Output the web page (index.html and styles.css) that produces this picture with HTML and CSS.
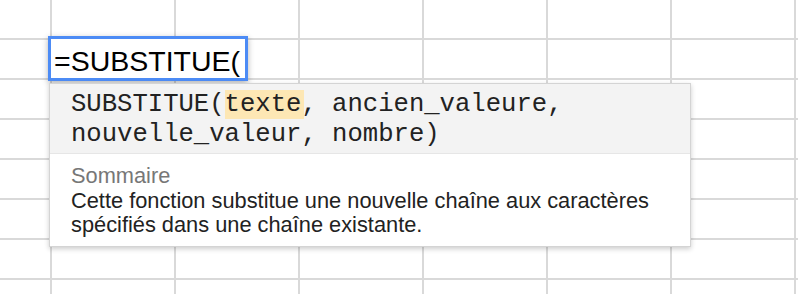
FILE: index.html
```html
<!DOCTYPE html>
<html lang="fr">
<head>
  <meta charset="UTF-8" />
  <title>Feuille - SUBSTITUE</title>
  <link rel="stylesheet" href="styles.css">
</head>
<body>

  <div class="sheet" id="sheet">
    <!-- cellules générées plus bas -->
  </div>

  <div class="formula-layer">
    <div class="cell-editor">=SUBSTITUE(</div>

    <div class="aide">
      <div class="aide-syntaxe">
        SUBSTITUE(<span class="arg-actif">texte</span>, ancien_valeure,<br>
        nouvelle_valeur, nombre)
      </div>
      <div class="aide-corps">
        <div class="aide-titre">Sommaire</div>
        <div class="aide-texte">Cette fonction substitue une nouvelle chaîne aux caractères spécifiés dans une chaîne existante.</div>
      </div>
    </div>
  </div>

  <script>
    const sheet = document.getElementById("sheet");
    const cols = 8, rows = 8;
    for (let r = 0; r < rows; r++) {
      for (let c = 0; c < cols; c++) {
        const cell = document.createElement("div");
        cell.className = "cell";
        if (c === cols - 1) cell.classList.add("no-right");
        if (r === rows - 1) cell.classList.add("no-bottom");
        sheet.appendChild(cell);
      }
    }
  </script>

</body>
</html>
```

FILE: styles.css
```css
body {
  margin: 0;
  background: white;
  font-family: 'Liberation Sans', Arial, sans-serif;
  overflow: hidden;
  position: relative;
  width: 798px;
  height: 294px;
}

.sheet {
  display: grid;
  grid-template-columns: 52px repeat(6, 124px) 2px;
  grid-template-rows: repeat(7, 40px) 14px;
  width: 798px;
  height: 294px;
  overflow: hidden;
}

.cell {
  box-sizing: border-box;
  border-right: 2px solid #d9d9d9;
  border-bottom: 2px solid #d9d9d9;
}

.cell.no-right {
  border-right: none;
}

.cell.no-bottom {
  border-bottom: none;
}

.formula-layer {
  position: absolute;
  left: 48px;
  top: 36px;
  display: flex;
  flex-direction: column;
}

.cell-editor {
  box-sizing: border-box;
  width: 200px;
  height: 45px;
  border: 3px solid #4c8bf5;
  background: white;
  padding: 6px 0 0 3px;
  font-size: 28.5px;
  line-height: 32px;
  color: #000;
  box-shadow: 0 2px 6px rgba(0,0,0,0.3);
  white-space: nowrap;
}

.aide {
  box-sizing: border-box;
  width: 642px;
  margin: 2px 0 0 1px;
  background: white;
  border: 1px solid #d4d4d4;
  box-shadow: 0 2px 5px rgba(0,0,0,0.2);
}

.aide-syntaxe {
  background: #f3f3f3;
  border-bottom: 1px solid #e6e6e6;
  padding: 6px 10px 4px 21px;
  font-family: 'Liberation Mono', 'Courier New', monospace;
  font-size: 25.6px;
  line-height: 29.5px;
  color: #222;
}

.arg-actif {
  background: #fde7b4;
  padding-right: 3px;
  margin-right: -3px;
}

.aide-corps {
  padding: 10px 10px 8px 21px;
  font-size: 21.8px;
  line-height: 24.5px;
}

.aide-titre {
  color: #777;
}

.aide-texte {
  color: #222;
}
```
